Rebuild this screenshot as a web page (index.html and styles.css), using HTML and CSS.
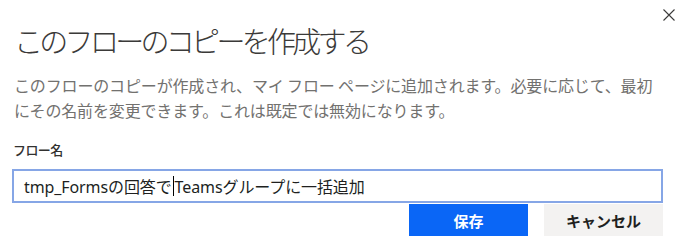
FILE: index.html
```html
<!DOCTYPE html>
<html lang="ja">
<head>
<meta charset="utf-8">
<link rel="stylesheet" href="styles.css">
</head>
<body>
<div class="dialog">
  <button class="close" aria-label="閉じる">
    <svg width="12" height="12" viewBox="0 0 12 12"><path d="M0.5 0.5 L11.5 11.5 M11.5 0.5 L0.5 11.5" stroke="#3b3a39" stroke-width="1.1" fill="none"/></svg>
  </button>
  <h1 class="title">このフローのコピーを作成する</h1>
  <p class="desc">このフローのコピーが作成され、マイ フロー ページに追加されます。必要に応じて、最初にその名前を変更できます。これは既定では無効になります。</p>
  <label class="label">フロー名</label>
  <div class="input"><span>tmp_Formsの回答で</span><span class="caret"></span><span>Teamsグループに一括追加</span></div>
  <div class="actions">
    <button class="btn primary">保存</button>
    <button class="btn secondary">キャンセル</button>
  </div>
</div>
</body>
</html>
```
FILE: styles.css
```css
html, body {
  margin: 0;
  padding: 0;
  background: #ffffff;
}
body {
  font-family: "Noto Sans", "Noto Sans CJK JP", sans-serif;
  color: #323130;
  width: 681px;
  height: 251px;
  overflow: hidden;
}
.dialog {
  position: relative;
  padding: 0 18px 0 12px;
  display: flex;
  flex-direction: column;
}
.close {
  position: absolute;
  top: 9px;
  right: 6px;
  width: 12px;
  height: 12px;
  padding: 0;
  border: 0;
  background: transparent;
  display: flex;
}
.title {
  margin: 22px 0 0 2px;
  font-family: "Noto Sans CJK JP", sans-serif;
  font-weight: 300;
  font-size: 29px;
  line-height: 36px;
  letter-spacing: -3.7px;
  color: #3b3a39;
}
.desc {
  margin: 15px 0 0 2px;
  font-family: "Noto Sans CJK JP", sans-serif;
  font-weight: 400;
  font-size: 16px;
  line-height: 25px;
  letter-spacing: -0.15px;
  color: #72716f;
}
.label {
  margin: 18px 0 0 1px;
  font-family: "Noto Sans CJK JP", sans-serif;
  font-weight: 500;
  font-size: 13px;
  line-height: 18px;
  letter-spacing: -0.6px;
  color: #323130;
}
.input {
  margin-top: 10px;
  height: 34px;
  box-sizing: border-box;
  border: 2px solid #86a6e6;
  padding: 0 10px;
  display: flex;
  align-items: center;
  font-size: 16px;
  color: #201f1e;
  letter-spacing: -0.1px;
}
.caret {
  width: 1px;
  height: 20px;
  background: #000;
  margin: 0 1px;
}
.actions {
  display: flex;
  justify-content: flex-end;
  gap: 16px;
  margin-top: 1px;
}
.btn {
  width: 119px;
  height: 32px;
  border: 0;
  padding: 0;
  font-family: "Noto Sans CJK JP", sans-serif;
  font-weight: 700;
  font-size: 15px;
}
.primary {
  background: #0a66f6;
  color: #ffffff;
}
.secondary {
  background: #f3f2f1;
  color: #201f1e;
}
```
